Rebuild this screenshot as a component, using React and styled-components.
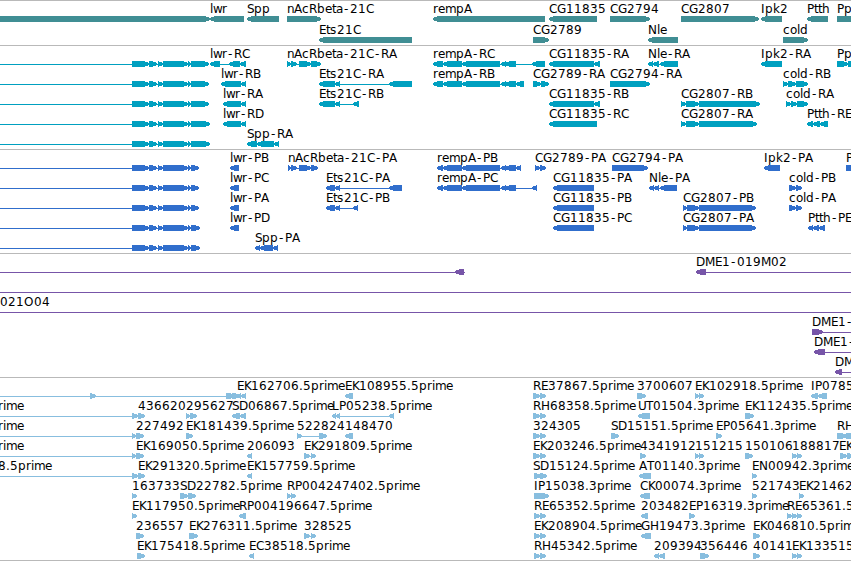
import React from 'react';
import styled, { createGlobalStyle } from 'styled-components';

const GlobalStyle = createGlobalStyle`
  body {
    margin: 0;
    background: #ffffff;
    overflow: hidden;
  }
`;

const Browser = styled.div`
  width: 851px;
  height: 561px;
  box-sizing: border-box;
  display: flex;
  flex-direction: column;
  overflow: hidden;
  border-bottom: 1px solid #b9b9b9;
`;

const Track = styled.section`
  flex: 0 0 ${props => props.$height}px;
  box-sizing: border-box;
  display: flex;
  flex-direction: column;
  border-top: 1px solid #b9b9b9;
  color: ${props => props.$color};
`;

const Lane = styled.svg`
  display: block;
  width: 100%;
  flex: 0 0 ${props => props.$pitch}px;
  overflow: visible;
  fill: currentColor;
  shape-rendering: crispEdges;
`;

const Label = styled.text`
  font-family: 'DejaVu Sans', sans-serif;
  font-size: 12px;
  fill: #000000;
  white-space: pre;
`;

// whole-pixel advances, digits and anything not listed are 8
const ADVANCE = {
  '.': 4, '-': 7,
  l: 3, i: 3, t: 4, r: 5, I: 4,
  c: 7, e: 7, a: 7, k: 7, s: 7, o: 7, n: 7,
  E: 7, K: 7, S: 7, P: 7, T: 7, L: 7,
  w: 9, G: 9, D: 9, H: 9, N: 9,
  M: 10, O: 10, m: 11,
};

function glyphPositions(text, start) {
  let x = start;
  return text.split('').map(ch => {
    // the hyphen is narrow, centre it in its cell
    const at = ch === '-' ? x + 1 : x;
    x += ADVANCE[ch] || 8;
    return at;
  }).join(' ');
}

function arrow(start, end, dir) {
  const head = Math.min(5, end - start);
  if (dir === 'L') {
    return `${start},17 ${start + head},15 ${end},15 ${end},21 ${start + head},21 ${start},19`;
  }
  return `${start},15 ${end - head},15 ${end},17 ${end},19 ${end - head},21 ${start},21`;
}

// item: [label, direction, exon bounds (start, end, start, end...), line bounds, label x]
function Feature({ item }) {
  const [label, dir, bounds, line, labelX] = item;
  const from = line ? line[0] : bounds[0];
  const to = line ? line[1] : bounds[bounds.length - 1];
  const exons = [];
  for (let i = 0; i < bounds.length; i += 2) {
    exons.push([bounds[i], bounds[i + 1]]);
  }
  return (
    <g>
      <rect x={from} y={18} width={to - from} height={1} />
      {exons.map(([a, b]) => <polygon key={a} points={arrow(a, b, dir)} />)}
      {label && (
        <Label x={glyphPositions(label, labelX === undefined ? bounds[0] : labelX)} y={12}>{label}</Label>
      )}
    </g>
  );
}

const base = [132, 149, 149, 157, 158, 163, 163, 188, 188, 191];
const mBase = end => ['', 'R', [...base, 191, end], [0, end]];
const remp = [443, 462, 462, 500, 501, 506, 505, 516];

const genes = [
  [
    ['', 'R', [-10, 210]],
    ['lwr', 'L', [210, 244]],
    ['Spp', 'L', [247, 279]],
    ['nAcRbeta-21C', 'R', [287, 321]],
    ['rempA', 'L', [433, 545]],
    ['CG11835', 'L', [549, 597]],
    ['CG2794', 'R', [610, 650]],
    ['CG2807', 'R', [681, 759]],
    ['Ipk2', 'L', [761, 782]],
    ['Ptth', 'L', [807, 828]],
    ['Pp', 'R', [837, 870]],
  ],
  [
    ['Ets21C', 'L', [319, 412]],
    ['CG2789', 'R', [533, 549]],
    ['Nle', 'L', [648, 678]],
    ['cold', 'R', [783, 808]],
  ],
];

const transcripts = [
  [
    mBase(209),
    ['lwr-RC', 'L', [210, 220, 229, 240, 240, 246]],
    ['nAcRbeta-21C-RA', 'R', [287, 291, 291, 297, 299, 311, 311, 321]],
    ['rempA-RC', 'L', [433, 443, ...remp, 532, 545]],
    ['CG11835-RA', 'L', [549, 594, 594, 600]],
    ['Nle-RA', 'L', [648, 653, 653, 659, 660, 678]],
    ['Ipk2-RA', 'L', [761, 782]],
    ['Pp', 'R', [837, 848, 848, 860]],
  ],
  [
    mBase(209),
    ['lwr-RB', 'L', [221, 241, 241, 246]],
    ['Ets21C-RA', 'L', [319, 335, 335, 340, 389, 412]],
    ['rempA-RB', 'L', [433, 443, ...remp, 516, 524]],
    ['CG2789-RA', 'R', [533, 541, 541, 549]],
    ['CG2794-RA', 'R', [610, 650]],
    ['cold-RB', 'R', [783, 788, 788, 796, 796, 808]],
  ],
  [
    mBase(209),
    ['lwr-RA', 'L', [223, 241, 241, 246]],
    ['Ets21C-RB', 'L', [319, 335, 335, 340, 353, 359]],
    ['CG11835-RB', 'L', [549, 594, 594, 600]],
    ['CG2807-RB', 'R', [681, 686, 686, 699, 699, 760]],
    ['cold-RA', 'R', [786, 791, 791, 797, 797, 808]],
  ],
  [
    mBase(210),
    ['lwr-RD', 'L', [223, 241, 241, 246]],
    ['CG11835-RC', 'L', [549, 597]],
    ['CG2807-RA', 'R', [681, 686, 686, 699, 699, 757]],
    ['Ptth-RE', 'L', [807, 813, 813, 820, 820, 828]],
  ],
  [
    mBase(210),
    ['Spp-RA', 'L', [247, 257, 257, 274, 274, 279]],
  ],
];

const proteins = [
  [
    mBase(199),
    ['lwr-PB', 'L', [230, 239]],
    ['nAcRbeta-21C-PA', 'R', [288, 291, 291, 297, 299, 311, 311, 318]],
    ['rempA-PB', 'L', [437, 443, ...remp, 516, 521]],
    ['CG2789-PA', 'R', [535, 540, 540, 546]],
    ['CG2794-PA', 'R', [612, 648]],
    ['Ipk2-PA', 'L', [764, 780]],
    ['P', 'R', [846, 860]],
  ],
  [
    mBase(199),
    ['lwr-PC', 'L', [230, 239]],
    ['Ets21C-PA', 'L', [326, 335, 335, 340, 389, 402]],
    ['rempA-PC', 'L', [437, 443, ...remp, 532, 537]],
    ['CG11835-PA', 'L', [553, 594]],
    ['Nle-PA', 'L', [649, 654, 654, 659, 660, 677]],
    ['cold-PB', 'R', [789, 796, 796, 802]],
  ],
  [
    mBase(199),
    ['lwr-PA', 'L', [230, 239]],
    ['Ets21C-PB', 'L', [326, 335, 335, 340, 353, 358]],
    ['CG11835-PB', 'L', [553, 594]],
    ['CG2807-PB', 'R', [683, 687, 687, 699, 699, 756]],
    ['cold-PA', 'R', [789, 796, 796, 802]],
  ],
  [
    mBase(200),
    ['lwr-PD', 'L', [230, 239]],
    ['CG11835-PC', 'L', [553, 594]],
    ['CG2807-PA', 'R', [683, 687, 687, 699, 699, 756]],
    ['Ptth-PE', 'L', [808, 813, 813, 819, 819, 825]],
  ],
  [
    mBase(200),
    ['Spp-PA', 'L', [255, 260, 260, 273, 273, 278]],
  ],
];

const clones = [
  [
    ['', 'L', [455, 464], [0, 465]],
    ['DME1-019M02', 'L', [696, 706], [696, 851]],
  ],
  [['', 'R', [], [0, 851]]],
  [['021O04', 'R', [], [0, 851], 0]],
  [['DME1-', 'R', [812, 823], [812, 851]]],
  [['DME1-', 'L', [814, 825], [814, 851]]],
  [['DM', 'L', [835, 842], [835, 851]]],
];

const ests = [
  [
    ['', 'R', [90, 96, 226, 235, 232, 240], [0, 240]],
    ['EK162706.5prime', 'L', [237, 241, 241, 246]],
    ['EK108955.5prime', 'L', [345, 353]],
    ['RE37867.5prime', 'R', [533, 540, 540, 546]],
    ['3700607', 'R', [637, 646]],
    ['EK102918.5prime', 'R', [695, 699, 699, 704]],
    ['IP0785', 'L', [811, 818, 818, 827]],
  ],
  [
    ['rime', 'R', [132, 138, 138, 145], [0, 145], -2],
    ['436620', 'R', [138, 145]],
    ['295627', 'R', [186, 190, 190, 197]],
    ['SD06867.5prime', 'L', [232, 240, 240, 246]],
    ['LP05238.5prime', 'L', [332, 336, 336, 340, 389, 394]],
    ['RH68358.5prime', 'R', [533, 540, 540, 546]],
    ['UT01504.3prime', 'L', [638, 650]],
    ['EK112435.5prime', 'R', [745, 754]],
  ],
  [
    ['rime', 'R', [132, 136], [0, 144], -2],
    ['227492', 'R', [136, 144]],
    ['EK181439.5prime', 'R', [186, 193]],
    ['522824', 'R', [297, 302, 319, 327]],
    ['148470', 'L', [345, 353]],
    ['324305', 'R', [533, 540, 540, 546]],
    ['SD15151.5prime', 'R', [611, 619]],
    ['EP05641.3prime', 'R', [716, 722]],
    ['RH', 'R', [837, 847, 846, 855]],
  ],
  [
    ['rime', 'R', [132, 136], [0, 144], -2],
    ['EK169050.5prime', 'R', [136, 144]],
    ['206093', 'L', [247, 252]],
    ['EK291809.5prime', 'R', [304, 310, 311, 316]],
    ['EK203246.5prime', 'R', [533, 540, 540, 546]],
    ['4341912', 'R', [640, 646]],
    ['151215', 'R', [695, 699, 699, 704]],
    ['150106', 'R', [745, 753]],
    ['188817', 'R', [792, 797, 797, 802]],
    ['EK', 'R', [840, 847, 847, 854], null, 839],
  ],
  [
    ['8.5prime', 'R', [132, 138], [0, 145], -2],
    ['EK291320.5prime', 'R', [138, 145]],
    ['EK157759.5prime', 'L', [247, 252]],
    ['SD15124.5prime', 'R', [534, 541, 540, 547], undefined, 533],
    ['AT01140.3prime', 'L', [639, 651]],
    ['EN00942.3prime', 'R', [752, 757]],
  ],
  [
    ['163733', 'R', [132, 137]],
    ['SD22782.5prime', 'R', [180, 188, 188, 196]],
    ['RP004247402.5prime', 'R', [287, 291, 291, 296]],
    ['IP15038.3prime', 'R', [534, 549]],
    ['CK00074.3prime', 'L', [640, 650]],
    ['521743', 'R', [752, 757]],
    ['EK21462', 'R', [799, 804]],
  ],
  [
    ['EK117950.5prime', 'R', [132, 137]],
    ['RP004196647.5prime', 'L', [239, 246]],
    ['RE65352.5prime', 'R', [534, 540, 540, 546]],
    ['203482', 'L', [641, 648]],
    ['EP16319.3prime', 'R', [689, 695]],
    ['RE65361.5', 'R', [787, 792, 792, 797, 797, 802]],
  ],
  [
    ['236557', 'R', [136, 144]],
    ['EK276311.5prime', 'R', [189, 198]],
    ['328525', 'R', [304, 310, 311, 316]],
    ['EK208904.5prime', 'R', [534, 540, 540, 546]],
    ['GH19473.3prime', 'L', [641, 651]],
    ['EK046810.5prime', 'R', [753, 760]],
  ],
  [
    ['EK175418.5prime', 'R', [137, 145]],
    ['EC38518.5prime', 'L', [249, 254]],
    ['RH45342.5prime', 'R', [534, 540, 540, 546]],
    ['209394', 'L', [654, 659, 659, 665]],
    ['356446', 'R', [700, 709]],
    ['40141', 'R', [753, 760]],
    ['EK133515', 'R', [792, 797, 797, 802]],
  ],
];

const tracks = [
  { id: 'genes', color: '#408e94', height: 45, pitch: 21, lanes: genes },
  { id: 'transcripts', color: '#00a0c0', height: 104, pitch: 20, lanes: transcripts },
  { id: 'proteins', color: '#306ecc', height: 104, pitch: 20, lanes: proteins },
  { id: 'clones', color: '#7755a8', height: 124, pitch: 20, lanes: clones },
  { id: 'ests', color: '#88bedf', height: 183, pitch: 20, lanes: ests },
];

function App() {
  return (
    <>
      <GlobalStyle />
      <Browser>
        {tracks.map(track => (
          <Track key={track.id} $color={track.color} $height={track.height}>
            {track.lanes.map((lane, i) => (
              <Lane key={i} $pitch={track.pitch} height={track.pitch}>
                {lane.map((item, j) => <Feature key={j} item={item} />)}
              </Lane>
            ))}
          </Track>
        ))}
      </Browser>
    </>
  );
}

export default App;
